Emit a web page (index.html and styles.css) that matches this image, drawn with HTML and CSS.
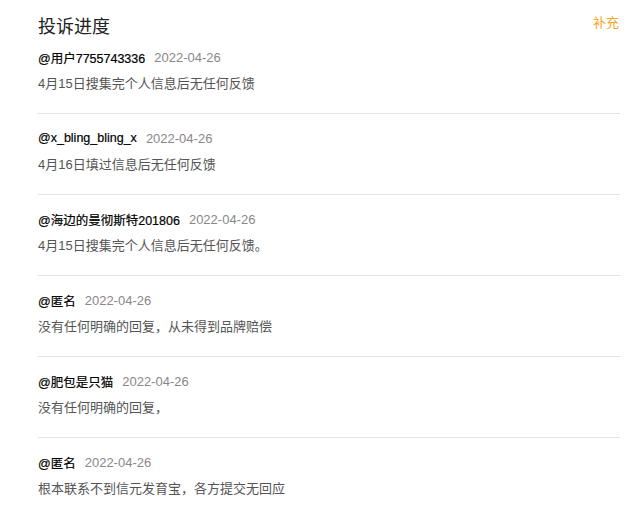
FILE: index.html
```html
<!DOCTYPE html>
<html lang="zh-CN">
    <head>
        <meta charset="UTF-8" />
        <meta name="viewport" content="width=device-width, initial-scale=1.0" />
        <title>投诉进度</title>
        <link rel="stylesheet" href="styles.css">
    </head>
    <body>
        <div class="progress">
            <div class="progress-header">
                <h1>投诉进度</h1>
                <a class="supplement" href="#">补充</a>
            </div>

            <ul class="reply-list">
                <li class="reply">
                    <div class="reply-meta">
                        <span class="reply-user">@用户7755743336</span>
                        <span class="reply-date">2022-04-26</span>
                    </div>
                    <p class="reply-text">4月15日搜集完个人信息后无任何反馈</p>
                </li>
                <li class="reply">
                    <div class="reply-meta">
                        <span class="reply-user">@x_bling_bling_x</span>
                        <span class="reply-date">2022-04-26</span>
                    </div>
                    <p class="reply-text">4月16日填过信息后无任何反馈</p>
                </li>
                <li class="reply">
                    <div class="reply-meta">
                        <span class="reply-user">@海边的曼彻斯特201806</span>
                        <span class="reply-date">2022-04-26</span>
                    </div>
                    <p class="reply-text">4月15日搜集完个人信息后无任何反馈。</p>
                </li>
                <li class="reply">
                    <div class="reply-meta">
                        <span class="reply-user">@匿名</span>
                        <span class="reply-date">2022-04-26</span>
                    </div>
                    <p class="reply-text">没有任何明确的回复，从未得到品牌赔偿</p>
                </li>
                <li class="reply">
                    <div class="reply-meta">
                        <span class="reply-user">@肥包是只猫</span>
                        <span class="reply-date">2022-04-26</span>
                    </div>
                    <p class="reply-text">没有任何明确的回复，</p>
                </li>
                <li class="reply">
                    <div class="reply-meta">
                        <span class="reply-user">@匿名</span>
                        <span class="reply-date">2022-04-26</span>
                    </div>
                    <p class="reply-text">根本联系不到信元发育宝，各方提交无回应</p>
                </li>
            </ul>
        </div>
    </body>
</html>
```

FILE: styles.css
```css
* {
    margin: 0;
    padding: 0;
    box-sizing: border-box;
    font-family: "Liberation Sans", "Noto Sans CJK SC", sans-serif;
}

body {
    background-color: #fff;
    color: #333;
}

.progress {
    padding: 13px 20px 0 38px;
}

/* Header */
.progress-header {
    display: flex;
    justify-content: space-between;
    align-items: flex-start;
    height: 24px;
}

.progress-header h1 {
    font-size: 18px;
    line-height: 24px;
    font-weight: 400;
    color: #222;
    padding-top: 2px;
}

.supplement {
    margin-top: 2px;
    margin-right: 1px;
    font-size: 13px;
    line-height: 16px;
    color: #f5a623;
    text-decoration: none;
}

/* Replies */
.reply-list {
    list-style: none;
}

.reply {
    padding: 14px 0 19px;
    border-bottom: 1px solid #e3e3e3;
}

.reply:first-child {
    padding-top: 10px;
}

.reply-meta {
    display: flex;
    align-items: center;
    gap: 9px;
    height: 20px;
    font-size: 13px;
}

.reply-user {
    font-size: 12.5px;
    color: #000;
    -webkit-text-stroke: 0.2px #000;
}

.reply-date {
    color: #888;
}

.reply-text {
    margin-top: 7px;
    font-size: 13px;
    line-height: 20px;
    color: #555;
}
```
